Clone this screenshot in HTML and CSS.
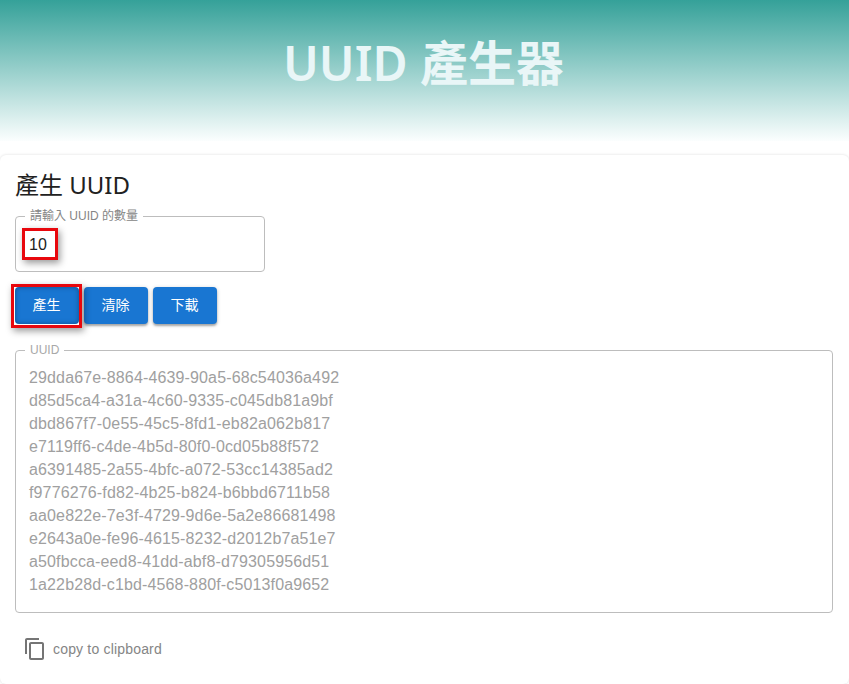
FILE: index.html
```html
<!DOCTYPE html>
<html lang="zh-Hant">
<head>
<meta charset="utf-8">
<title>UUID 產生器</title>
<link rel="stylesheet" href="styles.css">
</head>
<body>
<header class="hero"><h1 class="hero-title">UUID 產生器</h1></header>
<main class="card">
  <h2 class="card-title">產生 UUID</h2>
  <fieldset class="field field-count">
    <legend class="field-legend">請輸入 UUID 的數量</legend>
    <span class="count-value">10</span>
  </fieldset>
  <div class="actions">
    <button class="btn btn-marked">產生</button>
    <button class="btn">清除</button>
    <button class="btn">下載</button>
  </div>
  <fieldset class="field field-output">
    <legend class="field-legend legend-muted">UUID</legend>
    <div class="uuid-list">29dda67e-8864-4639-90a5-68c54036a492
d85d5ca4-a31a-4c60-9335-c045db81a9bf
dbd867f7-0e55-45c5-8fd1-eb82a062b817
e7119ff6-c4de-4b5d-80f0-0cd05b88f572
a6391485-2a55-4bfc-a072-53cc14385ad2
f9776276-fd82-4b25-b824-b6bbd6711b58
aa0e822e-7e3f-4729-9d6e-5a2e86681498
e2643a0e-fe96-4615-8232-d2012b7a51e7
a50fbcca-eed8-41dd-abf8-d79305956d51
1a22b28d-c1bd-4568-880f-c5013f0a9652</div>
  </fieldset>
  <div class="copy-row">
    <svg class="copy-icon" viewBox="0 0 24 24" width="24" height="24"><path d="M16 1H4c-1.100 0-2 .9-2 2v14h2V3h12V1zm3 4H8c-1.100 0-2 .9-2 2v14c0 1.100.9 2 2 2h11c1.100 0 2-.9 2-2V7c0-1.100-.9-2-2-2zm0 16H8V7h11v14z"/></svg>
    <span class="copy-label">copy to clipboard</span>
  </div>
</main>
</body>
</html>
```
FILE: styles.css
```css
* { box-sizing: border-box; }
html, body { margin: 0; padding: 0; }
body {
  width: 849px;
  height: 684px;
  overflow: hidden;
  background: #fff;
  font-family: "Liberation Sans", "Noto Sans CJK TC", sans-serif;
}
.hero {
  height: 141px;
  padding-top: 35px;
  background: linear-gradient(180deg, #35a199 0%, #fbfefe 100%);
  text-align: center;
}
.hero-title {
  margin: 0 2px 0 0;
  font-family: "Noto Sans", "Noto Sans CJK TC", sans-serif;
  font-size: 48px;
  line-height: 56px;
  font-weight: 600;
  color: #e9f6f7;
}
.card {
  margin-top: 14px;
  height: 529px;
  padding: 14px 16px 0 15px;
  border-radius: 6px;
  background: #fff;
  box-shadow: 0 0 3px rgba(0,0,0,.14);
}
.card-title {
  margin: 0;
  font-family: "Noto Sans", "Noto Sans CJK TC", sans-serif;
  font-size: 24px;
  line-height: 32px;
  font-weight: 400;
  color: #212121;
}
.field {
  margin: 0;
  padding: 0;
  border: 1px solid #bdbdbd;
  border-radius: 4px;
  min-width: 0;
}
.field-count {
  width: 250px;
  height: 62px;
  margin-top: 9px;
}
.field-legend {
  margin-left: 9px;
  padding: 0 5px;
  font-size: 12px;
  line-height: 12px;
  color: #858585;
}
.legend-muted { color: #a8a8a8; }
.count-value {
  display: inline-block;
  width: 36px;
  height: 32px;
  margin: 6px 0 0 6px;
  border: 3px solid #e8070d;
  box-shadow: 2px 3px 7px rgba(0,0,0,.4);
  padding-left: 4px;
  font-size: 16px;
  line-height: 27px;
  color: #212121;
}
.actions {
  display: flex;
  gap: 5px;
  margin-top: 15px;
}
.btn {
  width: 64px;
  height: 37px;
  padding: 0 1px 3px 0;
  border: 0;
  border-radius: 4px;
  background: #1976d2;
  color: #fff;
  font-family: inherit;
  font-size: 14px;
  box-shadow: 0 2px 2px rgba(0,0,0,.25), 0 1px 4px rgba(0,0,0,.2);
}
.btn-marked {
  position: relative;
  box-shadow: inset 0 0 5px rgba(0,0,0,.35);
}
.btn-marked::after {
  content: "";
  position: absolute;
  top: -3px;
  right: -3px;
  bottom: -4px;
  left: -4px;
  border: 3px solid #e8070d;
  box-shadow: 2px 3px 7px rgba(0,0,0,.4);
  pointer-events: none;
}
.field-output {
  height: 269px;
  margin-top: 20px;
}
.uuid-list {
  padding: 10px 0 0 13px;
  white-space: pre;
  font-size: 16px;
  line-height: 23px;
  letter-spacing: .14px;
  color: #a0a0a0;
}
.copy-row {
  display: flex;
  align-items: center;
  gap: 6px;
  margin: 24px 0 0 8px;
}
.copy-icon { fill: #757575; flex: none; }
.copy-label {
  font-size: 14px;
  letter-spacing: .18px;
  color: #858585;
}
```
